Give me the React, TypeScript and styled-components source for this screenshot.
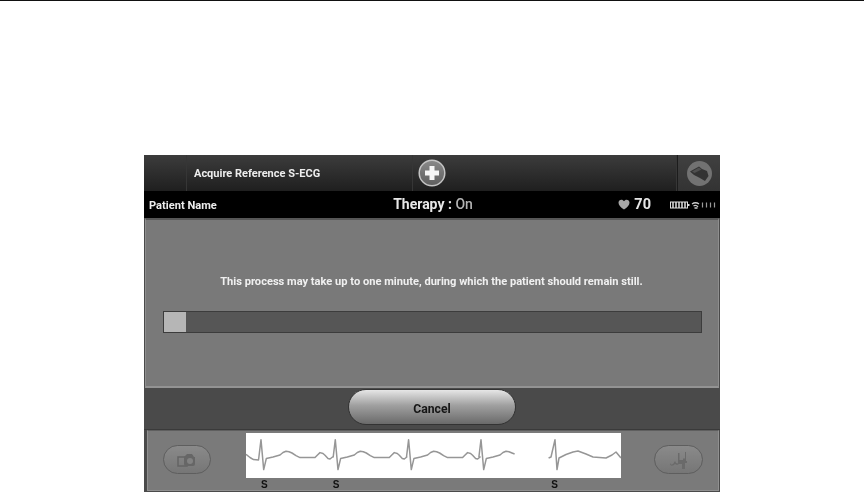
import React from "react";
import styled, { createGlobalStyle } from "styled-components";

const Global = createGlobalStyle`
  html, body { margin: 0; padding: 0; background: #fff; }
  body { font-family: Roboto, "Liberation Sans", sans-serif; }
`;
const Page = styled.div`
  width: 864px; height: 493px; overflow: hidden; background: #fff;
  border-top: 1px solid #111; box-sizing: border-box;
  padding: 154px 0 0 144px;
`;
const Device = styled.div`
  width: 576px; height: 337px; display: flex; flex-direction: column;
  background: #4a4a4a; filter: blur(0.4px);
`;
const TopBar = styled.div`
  height: 36px; display: flex; flex: none;
  background: linear-gradient(#3c3c3c, #1f1f1f);
`;
const TopCell = styled.div<{ $w: number; $light?: boolean }>`
  width: ${(p) => p.$w}px; flex: none; display: flex; align-items: center; box-sizing: border-box;
  border-right: 1px solid #363636;
  background: ${(p) => (p.$light ? "linear-gradient(#404040, #333)" : "transparent")};
  &:last-child { border-right: 0; border-left: 1px solid #1c1c1c; justify-content: center; }
`;
const Title = styled.span`
  color: #ededed; font-size: 11px; font-weight: 700; padding-left: 7px; white-space: nowrap;
`;
const RoundBtn = styled.svg`
  width: 28px; height: 28px; display: block; flex: none; margin-left: 5px;
`;
const RoundIcon = styled.svg`
  width: 27px; height: 27px; display: block;
`;
const StatusBar = styled.div`
  height: 27px; flex: none; background: #000; display: grid;
  grid-template-columns: 1fr auto 1fr; align-items: center; padding: 0 3px 2px 5px; box-sizing: border-box;
`;
const Patient = styled.span`
  color: #ececec; font-size: 11.1px; font-weight: 700; margin-top: 3px;
`;
const Therapy = styled.span`
  color: #e8e8e8; font-size: 14px; font-weight: 700;
  & > em { font-style: normal; color: #b4b4b4; font-weight: 500; }
`;
const StatusRight = styled.div`
  display: flex; justify-content: flex-end; align-items: center; margin-top: 2px;
`;
const Heart = styled.svg`
  width: 12px; height: 11px; display: block; margin-right: 4px;
`;
const Rate = styled.span`
  color: #e6e6e6; font-size: 14.5px; font-weight: 700; margin-right: 19px;
`;
const Indicators = styled.svg`
  width: 47px; height: 8px; display: block;
`;
const Main = styled.div`
  height: 170px; flex: none; box-sizing: border-box; background: #797979;
  margin: 0 1px; border-top: 2px solid #565656;
  border-left: 1px solid #8e8e8e; border-right: 1px solid #8e8e8e; border-bottom: 2px solid #939393;
  display: flex; flex-direction: column; align-items: center; padding: 55px 16px 0 17px;
`;
const Message = styled.div`
  color: #f0f0f0; font-size: 11.1px; font-weight: 700; line-height: 14px; white-space: nowrap; margin-right: 2px;
`;
const Track = styled.div`
  width: 100%; height: 22px; margin-top: 22px; box-sizing: border-box; flex: none;
  background: #565656; border: 1px solid #3c3c3c; display: flex;
`;
const Fill = styled.div`
  width: 22px; background: #b6b6b6;
`;
const ActionBar = styled.div`
  height: 42px; flex: none; display: flex; justify-content: center; align-items: center;
  background: #4a4a4a; border-bottom: 1px solid #3a3a3a; box-sizing: border-box; padding-bottom: 3px;
`;
const Cancel = styled.button`
  width: 168px; height: 36px; border-radius: 18px; border: 1px solid #333; padding: 3px 0 0;
  background: linear-gradient(#e6e6e6, #a0a0a0 45%, #6a6a6a);
  color: #161616; font: 700 12.2px Roboto, "Liberation Sans", sans-serif;
`;
const Strip = styled.div`
  height: 61px; flex: none; box-sizing: border-box; margin: 0 1px 1px 3px;
  background: #7a7a7a; border: 1px solid #909090; border-top-color: #5f5f5f;
  display: flex; align-items: flex-start; padding: 2px 15px 0 15px;
  justify-content: space-between;
`;
const PillBtn = styled.div<{ $w: number }>`
  width: ${(p) => p.$w}px; height: 29px; border-radius: 15px; box-sizing: border-box; margin-top: 12px;
  border: 1px solid #5e5e5e; background: linear-gradient(#8a8a8a, #767676);
  display: flex; align-items: center; justify-content: center; flex: none;
`;
const PillIcon = styled.svg`
  width: 24px; height: 20px; display: block;
`;
const Trace = styled.div`
  width: 375px; flex: none; display: flex; flex-direction: column; margin-left: 2px;
`;
const TraceBox = styled.svg`
  width: 375px; height: 45px; display: block; background: #fff;
`;
const Marks = styled.div`
  height: 13px; display: flex;
  font: 700 10px "Liberation Sans", sans-serif; color: #111; line-height: 13px;
`;
const Mark = styled.span<{ $gap: number }>`
  margin-left: ${(p) => p.$gap}px;
`;

const beat: [number, number][] = [
  [-2.1, 24], [0, 6.7], [2.7, 36.6], [5.3, 25.6], [12, 24], [19, 22], [22, 19.5], [25, 18.3], [28, 18.8], [31, 20],
  [35, 22.6], [39, 24.6], [54, 24.6], [56.5, 22], [59, 19.6], [62, 20.5], [64, 22.3], [67, 25.5], [69, 26], [71.5, 24],
];
const path1 = [
  "0,21.3", "4,24.5", "7.5,26.6", "12.5,27",
  ...[15, 89.3, 162.6, 235].flatMap((p) => beat.map(([dx, y]) => `${p + dx},${y}`)),
].filter((s) => parseFloat(s) <= 268.6).join(" ") + " 268.6,21";
const path2 =
  "302.6,25 305,24 309,6.7 311,36.6 313,25 320,21.5 327,19 332,18 340,21 347,24 360,25 366,22 370,19 375,25";

export default function App() {
  return (
    <Page>
      <Global />
      <Device>
        <TopBar>
          <TopCell $w={43} />
          <TopCell $w={226}><Title>Acquire Reference S-ECG</Title></TopCell>
          <TopCell $w={264}>
            <RoundBtn viewBox="0 0 28 28">
              <defs>
                <linearGradient id="plusFill" x1="0" y1="0" x2="0" y2="1">
                  <stop offset="0" stopColor="#8a8a8a" />
                  <stop offset="1" stopColor="#5e5e5e" />
                </linearGradient>
              </defs>
              <circle cx="14" cy="14" r="12.800" fill="url(#plusFill)" stroke="#c4c4c4" strokeWidth="1.500" />
              <path d="M11.500 7h5v4.500H21v5h-4.500V21h-5v-4.500H7v-5h4.500z" fill="#f6f6f6" />
            </RoundBtn>
          </TopCell>
          <TopCell $w={43} $light>
            <RoundIcon viewBox="0 0 27 27">
              <circle cx="13.500" cy="13.500" r="12.500" fill="#727272" />
              <path d="M4 11.500l9-5 3 2.500 5 2 1.500 5-3.500 5-6-3.500-5-2.500z" fill="#333" />
              <path d="M6 11.500l7-4 2.500 2-7 3.500z" fill="#505050" />
            </RoundIcon>
          </TopCell>
        </TopBar>
        <StatusBar>
          <Patient>Patient Name</Patient>
          <Therapy>Therapy : <em>On</em></Therapy>
          <StatusRight>
            <Heart viewBox="0 0 13 12">
              <path d="M6.500 11.500C3 9 .5 6.800.5 4 .5 2 2 .7 3.600.7c1.200 0 2.300.6 2.900 1.700C7.100 1.300 8.200.7 9.400.7 11 .7 12.500 2 12.500 4c0 2.800-2.500 5-6 7.500z" fill="#a8a8a8" />
            </Heart>
            <Rate>70</Rate>
            <Indicators viewBox="0 0 47 8">
              <rect x="0.500" y="1" width="17" height="6" fill="none" stroke="#e0e0e0" />
              <path d="M3 1v6M6 1v6M9 1v6M12 1v6M15 1v6" stroke="#e0e0e0" strokeWidth="1.500" />
              <rect x="18" y="3" width="1.500" height="2" fill="#ddd" />
              <path d="M22 3a6 6 0 0 1 7 0M23.500 4.800a4 4 0 0 1 4.500 1M24.500 7h3" stroke="#ccc" strokeWidth="1.300" fill="none" />
              <path d="M32.500 1.500v5M36.500 1.500v5M40.500 1.500v5M44.500 1.500v5" stroke="#999" strokeWidth="1.200" />
            </Indicators>
          </StatusRight>
        </StatusBar>
        <Main>
          <Message>This process may take up to one minute, during which the patient should remain still.</Message>
          <Track><Fill /></Track>
        </Main>
        <ActionBar><Cancel>Cancel</Cancel></ActionBar>
        <Strip>
          <PillBtn $w={48}>
            <PillIcon viewBox="0 0 24 20">
              <rect x="3" y="7" width="9" height="9" fill="none" stroke="#646464" strokeWidth="1.500" />
              <path d="M9 7l3-3h5l2 3h1v7a2 2 0 0 1-2 2h-7a2 2 0 0 1-2-2z" fill="#666" />
              <circle cx="15" cy="11" r="3" fill="#828282" />
            </PillIcon>
          </PillBtn>
          <Trace>
            <TraceBox viewBox="0 0 375 45">
              <polyline points={path1} fill="none" stroke="#969696" strokeWidth="1.500" strokeLinejoin="round" />
              <polyline points={path2} fill="none" stroke="#969696" strokeWidth="1.500" strokeLinejoin="round" />
            </TraceBox>
            <Marks>
              <Mark $gap={15}>S</Mark>
              <Mark $gap={65}>S</Mark>
              <Mark $gap={212}>S</Mark>
            </Marks>
          </Trace>
          <PillBtn $w={49}>
            <PillIcon viewBox="0 0 24 20">
              <path d="M3 13c1 2 2.500 2 3.500.5L8 11l1 2 2 .5V3h1.500v7H16v-1.500h2V2h1v9h1v2h-2v6h-3v-5h-3l-2 1-2-1-2 1.500c-2 .5-3-.5-3-1.500z" fill="#6a6a6a" />
            </PillIcon>
          </PillBtn>
        </Strip>
      </Device>
    </Page>
  );
}
